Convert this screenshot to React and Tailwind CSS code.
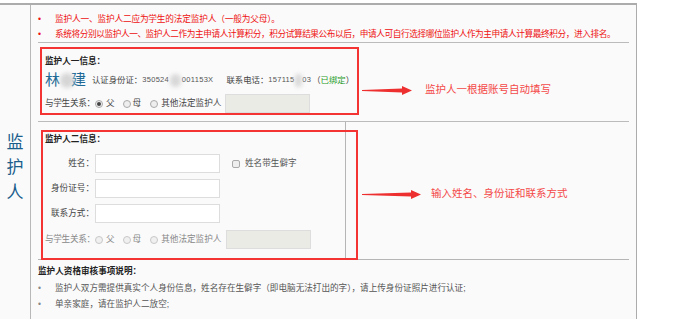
const font = "font-['Liberation_Sans','Noto_Sans_CJK_SC',sans-serif]";

function Radio({ checked, dim }) {
  return (
    <span
      className={`inline-flex h-[8px] w-[8px] shrink-0 items-center justify-center rounded-full border ${
        dim ? 'border-[#c8c8c8] bg-[#f0f0f0]' : 'border-[#aaa] bg-[#eee]'
      }`}
    >
      {checked && <span className="h-[4px] w-[4px] rounded-full bg-[#444]" />}
    </span>
  )
}

function Relation({ dim, checked }) {
  const tc = dim ? 'text-[#888]' : 'text-[#444]'
  return (
    <div className={`flex h-[19px] items-center whitespace-nowrap text-[8.6px] ${tc}`}>
      <span className="w-[50px] shrink-0 tracking-[-0.3px]">与学生关系：</span>
      <Radio checked={checked} dim={dim} />
      <span className="ml-[3px]">父</span>
      <span className="ml-[8px] flex"><Radio dim={dim} /></span>
      <span className="ml-[2px]">母</span>
      <span className="ml-[9px] flex"><Radio dim={dim} /></span>
      <span className="ml-[3px]">其他法定监护人</span>
      <span className="absolute left-[183px] h-[19px] w-[85px] border border-[#ddd] bg-[#ebebe6]" />
    </div>
  )
}

function Arrow({ w }) {
  return (
    <svg width={w} height="11" viewBox={`0 0 ${w} 11`} className="shrink-0">
      <polygon
        points={`0,5 ${w - 10},3.6 ${w - 10},1 ${w},5.5 ${w - 10},10 ${w - 10},7.4 0,6`}
        fill="#ee2f2f"
      />
    </svg>
  )
}

function Field({ label }) {
  return (
    <div className="flex h-[19px] items-center">
      <span className="w-[49px] shrink-0 whitespace-nowrap text-right text-[8.6px] text-[#444]">{label}</span>
      <span className="ml-[1px] h-[19px] w-[125px] border border-[#ddd] bg-white" />
    </div>
  )
}

export default function App() {
  return (
    <div className={`h-[319px] w-[674px] overflow-hidden bg-white pt-[3px] ${font}`}>
      <div className="flex h-[316px] w-[637px] border-t-2 border-r border-[#acacac] bg-[#fafafa]">
        {/* left label cell */}
        <div className="flex w-[31px] shrink-0 flex-col items-center border-r border-[#b8b8b8] pt-[125px] text-[17px] leading-[25px] text-[#1b5e8c]">
          <span>监</span>
          <span>护</span>
          <span>人</span>
        </div>

        {/* right content cell */}
        <div className="flex-1 px-[7px]">
          <ul className="border-b border-[#bbb] pt-[7px] text-[8.7px] leading-[15px] text-[#ee1111]">
            <li className="flex">
              <span className="w-[17px] shrink-0">•</span>
              <span className="whitespace-nowrap tracking-[-0.2px]">监护人一、监护人二应为学生的法定监护人（一般为父母）。</span>
            </li>
            <li className="flex">
              <span className="w-[17px] shrink-0">•</span>
              <span className="whitespace-nowrap tracking-[-0.45px]">系统将分别以监护人一、监护人二作为主申请人计算积分，积分试算结果公布以后，申请人可自行选择哪位监护人作为主申请人计算最终积分，进入排名。</span>
            </li>
          </ul>

          {/* guardian one */}
          <div className="flex h-[79px] items-start border-b border-[#bbb] pt-[4px]">
            <div className="relative ml-[2px] h-[68px] w-[319px] shrink-0 border-2 border-[#f43333] px-[3px] pt-[5px]">
              <div className="text-[8.6px] font-bold leading-[14px] text-[#222]">监护人一信息：</div>
              <div className="mt-[3px] flex h-[18px] items-center whitespace-nowrap">
                <span className="text-[15px] leading-[18px] text-[#1e6a96]">林</span>
                <span className="-mr-[3px] h-[15px] w-[22px] rounded-full bg-[#d6d6d6] blur-[2px]" />
                <span className="text-[15px] leading-[18px] text-[#1e6a96]">建</span>
                <span className="ml-[6px] text-[8.4px] text-[#444]">认证身份证：</span>
                <span className="text-[7.5px] tracking-[0.3px] text-[#555]">350524</span>
                <span className="mx-[1px] h-[13px] w-[17px] rounded-full bg-[#d8d8d8] blur-[2px]" />
                <span className="text-[7.5px] tracking-[0.3px] text-[#555]">001153X</span>
                <span className="ml-[13px] text-[8.4px] text-[#444]">联系电话：</span>
                <span className="text-[7.5px] tracking-[0.3px] text-[#555]">157115</span>
                <span className="h-[13px] w-[12px] rounded-full bg-[#d8d8d8] blur-[2px]" />
                <span className="text-[7.5px] tracking-[0.3px] text-[#555]">03</span>
                <span className="ml-[1px] text-[8.4px] text-[#444]">（<span className="text-[#1f9a1f]">已绑定</span>）</span>
              </div>
              <div className="mt-[5px]">
                <Relation checked />
              </div>
            </div>
            <div className="ml-[3px] mt-[36px] flex h-[14px] items-center">
              <Arrow w={50} />
              <span className="ml-[13px] whitespace-nowrap text-[10.5px] text-[#f44848]">监护人一根据账号自动填写</span>
            </div>
          </div>

          {/* guardian two */}
          <div className="relative flex h-[138px] items-start border-b border-[#b5b5b5] pt-[8px]">
            <span className="absolute bottom-0 left-[307px] top-0 w-px bg-[#b5b5b5]" />
            <div className="relative ml-[3px] h-[130px] w-[317px] shrink-0 border-2 border-[#f43333] px-[2px]">
              <div className="text-[8.6px] font-bold leading-[14px] text-[#222]">监护人二信息：</div>
              <div className="mt-[8px] flex items-center">
                <Field label="姓名：" />
                <span className="ml-[12px] h-[8px] w-[8px] rounded-[2px] border border-[#aaa] bg-[#eee]" />
                <span className="ml-[5px] text-[8.6px] text-[#555]">姓名带生僻字</span>
              </div>
              <div className="mt-[6px]">
                <Field label="身份证号：" />
              </div>
              <div className="mt-[6px]">
                <Field label="联系方式：" />
              </div>
              <div className="mt-[7px]">
                <Relation dim />
              </div>
            </div>
            <div className="ml-[4px] mt-[57px] flex h-[14px] items-center">
              <Arrow w={59} />
              <span className="ml-[10px] whitespace-nowrap text-[10.5px] text-[#f44848]">输入姓名、身份证和联系方式</span>
            </div>
          </div>

          <div className="mt-[4px] text-[8.6px] font-bold leading-[14px] text-[#222]">监护人资格审核事项说明：</div>
          <ul className="mt-[2px] text-[8.6px] leading-[16px] text-[#555]">
            <li className="flex">
              <span className="w-[17px] shrink-0 text-[#888]">•</span>
              <span className="whitespace-nowrap">监护人双方需提供真实个人身份信息，姓名存在生僻字（即电脑无法打出的字），请上传身份证照片进行认证;</span>
            </li>
            <li className="flex">
              <span className="w-[17px] shrink-0 text-[#888]">•</span>
              <span>单亲家庭，请在监护人二放空;</span>
            </li>
          </ul>
        </div>
      </div>
    </div>
  )
}
